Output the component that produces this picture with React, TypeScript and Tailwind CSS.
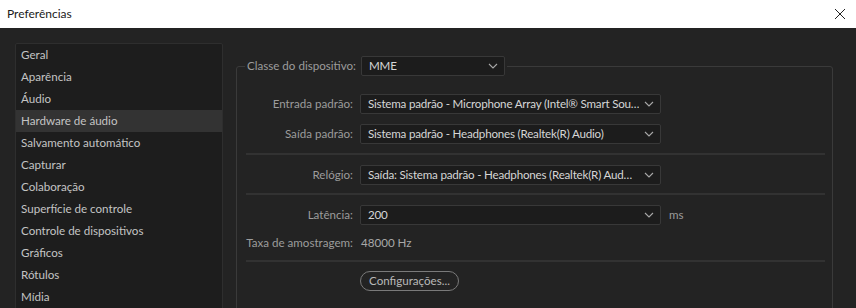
import { ReactNode } from "react";

const menuItems = [
  "Geral",
  "Aparência",
  "Áudio",
  "Hardware de áudio",
  "Salvamento automático",
  "Capturar",
  "Colaboração",
  "Superfície de controle",
  "Controle de dispositivos",
  "Gráficos",
  "Rótulos",
  "Mídia",
];

const Chevron = () => (
  <svg width="10" height="6" viewBox="0 0 10 6" className="shrink-0 ml-[2px]">
    <path d="M1 1 L5 5 L9 1" fill="none" stroke="#a8a8a8" strokeWidth="1.1" />
  </svg>
);

const Select = ({ value, width }: { value: string; width: string }) => (
  <div
    className={`${width} h-[20px] flex items-center justify-between pl-[7px] pr-[6px] bg-[#1c1c1c] border border-[#383838] rounded-[2px] text-[#d6d6d6]`}
  >
    <span className="whitespace-nowrap overflow-hidden min-w-0 tracking-[-0.2px]">{value}</span>
    <Chevron />
  </div>
);

const Row = ({ label, children }: { label: string; children: ReactNode }) => (
  <div className="flex items-center">
    <div className="w-[108px] shrink-0 text-right text-[#9c9c9c] pr-px whitespace-nowrap">
      {label}
    </div>
    <div className="ml-[6px] flex items-center">{children}</div>
  </div>
);

const Separator = () => <div className="h-[2px] bg-[#323232] mr-[7px]" />;

export default function App() {
  return (
    <div
      className="w-[856px] h-[308px] overflow-hidden bg-[#232323] text-[11.6px] leading-[16px]"
      style={{ fontFamily: '"Segoe UI", Lato, "Noto Sans", sans-serif' }}
    >
      {/* title bar */}
      <div className="h-[28px] bg-white flex items-center justify-between pl-[7px] pr-[10px] text-[#1a1a1a] text-[12px]">
        <span>Preferências</span>
        <svg width="12" height="12" viewBox="0 0 12 12">
          <path d="M1 1 L11 11 M11 1 L1 11" stroke="#222" strokeWidth="1" />
        </svg>
      </div>

      <div className="flex pl-[15px] pt-[15px]">
        {/* sidebar */}
        <div className="w-[208px] h-[300px] shrink-0 bg-[#1d1d1d] border border-[#2e2e2e] rounded-[2px]">
          {menuItems.map((item) => (
            <div
              key={item}
              className={`h-[22px] flex items-center pl-[5px] text-[#c4c4c4] ${
                item === "Hardware de áudio" ? "bg-[#333333]" : ""
              }`}
            >
              {item}
            </div>
          ))}
        </div>

        {/* settings group */}
        <fieldset className="ml-[13px] mt-[13px] w-[597px] h-[300px] border border-[#3a3a3a] rounded-[3px] pl-[9px]">
          <legend className="-ml-[1px] px-[2px] flex items-center">
            <span className="text-[#9c9c9c] mr-[5px] whitespace-nowrap">Classe do dispositivo:</span>
            <Select value="MME" width="w-[144px]" />
          </legend>

          <div className="flex flex-col mt-[18px]">
            <Row label="Entrada padrão:">
              <Select
                value="Sistema padrão - Microphone Array (Intel® Smart Sou…"
                width="w-[301px]"
              />
            </Row>
            <div className="mt-[10px]">
              <Row label="Saída padrão:">
                <Select
                  value="Sistema padrão - Headphones (Realtek(R) Audio)"
                  width="w-[301px]"
                />
              </Row>
            </div>
            <div className="mt-[9px]">
              <Separator />
            </div>
            <div className="mt-[10px]">
              <Row label="Relógio:">
                <Select
                  value="Saída: Sistema padrão - Headphones (Realtek(R) Aud…"
                  width="w-[301px]"
                />
              </Row>
            </div>
            <div className="mt-[8px]">
              <Separator />
            </div>
            <div className="mt-[10px]">
              <Row label="Latência:">
                <Select value="200" width="w-[301px]" />
                <span className="ml-[8px] text-[#9c9c9c]">ms</span>
              </Row>
            </div>
            <div className="mt-[10px]">
              <Row label="Taxa de amostragem:">
                <span className="text-[#a8a8a8] pl-px">48000 Hz</span>
              </Row>
            </div>
            <div className="mt-[9px]">
              <Separator />
            </div>
            <div className="mt-[9px] pl-[114px]">
              <button className="w-[99px] h-[20px] rounded-full border border-[#7a7a7a] text-[#b8b8b8] leading-[16px]">
                Configurações...
              </button>
            </div>
          </div>
        </fieldset>
      </div>
    </div>
  );
}
